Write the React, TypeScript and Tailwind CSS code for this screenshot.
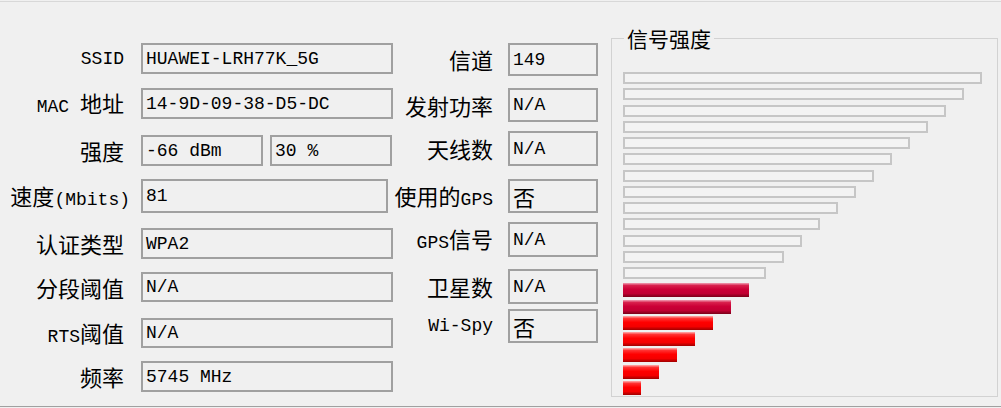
import clsx from 'clsx';

const ascii = "font-['Liberation_Mono',monospace] text-[18px]";
const cjk = "font-['Noto_Sans_CJK_SC',sans-serif] text-[22px]";

function Mixed({ text }: { text: string }) {
	const parts = text.match(/[\x00-\x7f]+|[^\x00-\x7f]+/g) ?? [];
	return (
		<>
			{parts.map((p, i) => (
				<span key={i} className={clsx('whitespace-pre', /^[\x00-\x7f]+$/.test(p) ? ascii : cjk)}>
					{p}
				</span>
			))}
		</>
	);
}

function Box({ value, className }: { value: string; className: string }) {
	return (
		<div className={clsx('flex items-center border-2 border-[#a0a0a0] pl-[3px] leading-none text-black', className)}>
			<Mixed text={value} />
		</div>
	);
}

const leftRows = [
	{ label: 'SSID', mt: 'mt-[41px]', h: 'h-[31px]', value: 'HUAWEI-LRH77K_5G' },
	{ label: 'MAC 地址', mt: 'mt-[14px]', h: 'h-[31px]', value: '14-9D-09-38-D5-DC' },
	{ label: '强度', mt: 'mt-[16px]', h: 'h-[31px]', value: '' },
	{ label: '速度(Mbits)', mt: 'mt-[13px]', h: 'h-[34px]', value: '81', w: 'w-[247px]', pr: 'pr-[11px]' },
	{ label: '认证类型', mt: 'mt-[15px]', h: 'h-[31px]', value: 'WPA2' },
	{ label: '分段阈值', mt: 'mt-[13px]', h: 'h-[30px]', value: 'N/A' },
	{ label: 'RTS阈值', mt: 'mt-[16px]', h: 'h-[30px]', value: 'N/A' },
	{ label: '频率', mt: 'mt-[13px]', h: 'h-[31px]', value: '5745 MHz' },
];

const midRows = [
	{ label: '信道', mt: 'mt-[41px]', h: 'h-[33px]', value: '149' },
	{ label: '发射功率', mt: 'mt-[12px]', h: 'h-[34px]', value: 'N/A' },
	{ label: '天线数', mt: 'mt-[9px]', h: 'h-[35px]', value: 'N/A' },
	{ label: '使用的GPS', mt: 'mt-[13px]', h: 'h-[34px]', value: '否' },
	{ label: 'GPS信号', mt: 'mt-[9px]', h: 'h-[35px]', value: 'N/A' },
	{ label: '卫星数', mt: 'mt-[12px]', h: 'h-[35px]', value: 'N/A' },
	{ label: 'Wi-Spy', mt: 'mt-[5px]', h: 'h-[34px]', value: '否' },
];

// 20 bars, bottom 7 lit
const bars = Array.from({ length: 20 }, (_, i) => ({ width: 18 * (20 - i) - 1, level: i }));

export default function App() {
	return (
		<div className="h-[408px] w-[1001px] bg-[#f0f0f0] pt-px overflow-hidden">
			<div className="h-[406px] border-t border-b border-t-[#d8d8d8] border-b-[#a0a0a0] flex text-black">
				<div className="flex flex-col w-[393px]">
					{leftRows.map((r) => (
						<div key={r.label} className={clsx('flex items-center', r.mt, r.h)}>
							<div className={clsx('w-[141px] shrink-0 text-right whitespace-nowrap leading-none', r.pr ?? 'pr-[17px]')}>
								<Mixed text={r.label} />
							</div>
							{r.label === '强度' ? (
								<div className="flex gap-[7px] h-full">
									<Box value="-66 dBm" className="w-[122px] h-full" />
									<Box value="30 %" className="w-[122px] h-full" />
								</div>
							) : (
								<Box value={r.value} className={clsx('h-full', r.w ?? 'w-[252px]')} />
							)}
						</div>
					))}
				</div>
				<div className="flex flex-col w-[205px]">
					{midRows.map((r) => (
						<div key={r.label} className={clsx('flex items-center', r.mt, r.h)}>
							<div className="w-[115px] shrink-0 pr-[15px] text-right whitespace-nowrap leading-none">
								<Mixed text={r.label} />
							</div>
							<Box value={r.value} className="w-[90px] h-full" />
						</div>
					))}
				</div>
				<fieldset className="mt-[24px] ml-[13px] w-[387px] h-[371px] border border-[#d2d2d2] pl-[11px] pt-[22px]">
					<legend className="ml-[1px] px-[3px] font-['Noto_Sans_CJK_SC',sans-serif] text-[21px] leading-[24px]">
						信号强度
					</legend>
					<div className="flex flex-col">
						{bars.map((b) => (
							<div key={b.level} className="h-[16.25px]">
								{b.level < 13 ? (
									<div className="h-[12px] border-2 border-[#c6c6c6] bg-[#f3f3f3]" style={{ width: b.width }} />
								) : b.level < 15 ? (
									<div
										className="h-[14px] bg-[linear-gradient(to_bottom,#f0a0b4_0%,#d8204c_18%,#cc0036_45%,#c00032_75%,#7a0018_100%)]"
										style={{ width: b.width + 1 }}
									/>
								) : (
									<div
										className="h-[14px] bg-[linear-gradient(to_bottom,#ffb0b0_0%,#ff3030_18%,#ff0000_45%,#f40000_75%,#a00000_100%)]"
										style={{ width: b.width + 1 }}
									/>
								)}
							</div>
						))}
					</div>
				</fieldset>
			</div>
		</div>
	);
}
